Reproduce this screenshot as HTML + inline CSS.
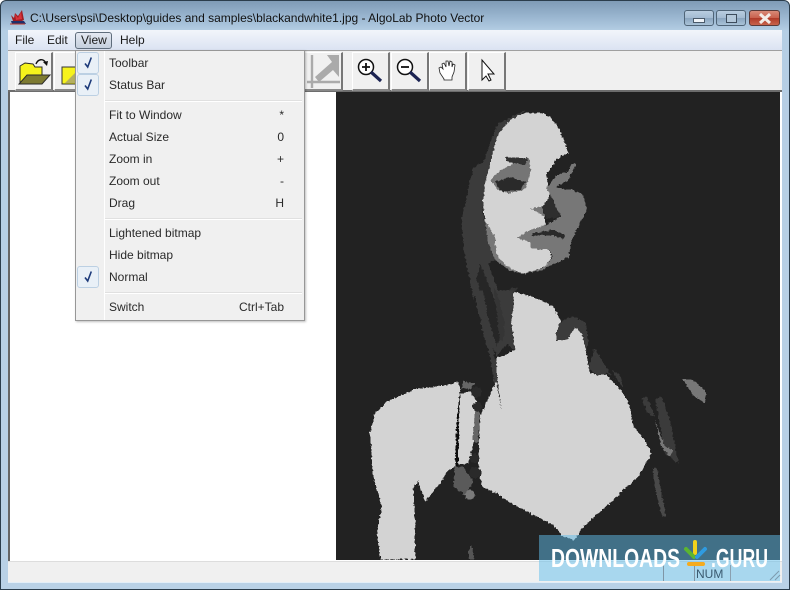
<!DOCTYPE html>
<html><head><meta charset="utf-8">
<style>
html,body{margin:0;padding:0;background:#fff}
body{width:790px;height:590px;position:relative;overflow:hidden;font-family:"Liberation Sans",sans-serif;font-size:12px;color:#1a1a1a}
div{position:absolute;box-sizing:border-box}
.frame{left:0;top:0;width:790px;height:590px;background:linear-gradient(#7f9bb6 0,#9ab6d0 16px,#b5cee4 30px,#b9d1e6 590px);border:1px solid #2b3d4c;border-radius:6px 6px 0 0}
.menubar{left:8px;top:30px;width:774px;height:20px;background:linear-gradient(#f2f5fb,#dbe3f2)}
.m{top:33px;font-size:12px;line-height:14px}
.toolbar{left:8px;top:50px;width:774px;height:42px;background:#f0f0f0;border-top:1px solid #a0a0a0;border-bottom:2px solid #6d6d6d}
.btn{top:52px;width:38px;height:39px;background:#f0f0f0;border-top:1px solid #fff;border-left:1px solid #fff;border-right:2px solid #777;border-bottom:2px solid #888}
.client{left:8px;top:92px;width:774px;height:469px;background:#fff;border-left:2px solid #666}
.status{left:8px;top:561px;width:774px;height:21px;background:#f0f0f0;border-top:1px solid #ddd}
.menu{left:75px;top:50px;width:230px;height:271px;background:#f0f0f0;border:1px solid #979797;box-shadow:1px 1px 2px rgba(0,0,0,.25)}
.gut{left:104px;top:51px;width:1px;height:269px;background:#e2e3e3;border-right:1px solid #fff}
.it{left:109px;font-size:12px;line-height:14px;color:#2a2a2a}
.sc{right:506px;font-size:12px;line-height:14px;color:#2a2a2a;text-align:right}
.sep{left:105px;width:197px;height:2px;background:#e0e0e0;border-bottom:1px solid #fff}
.ck{left:77px;width:22px;height:22px;background:#e9f0f7;border:1px solid #bcd0e3;border-radius:3px}
.wb{top:10px;height:16px;border:1px solid #4f6477;border-radius:3px}
</style></head><body>
<div class="frame"></div>
<svg style="position:absolute;left:0;top:0" width="30" height="30"><path d="M11 15l3 3 1-5 3 3 4-6 2 10-4 2-7-1z" fill="#a11c22"/><path d="M15 14l3 4 3-6 1 7-6 1z" fill="#d8323a"/><path d="M11 21h13l2 3H12z" fill="#1f2f6b"/><path d="M10 24h15" stroke="#c0392b"/></svg>
<div style="left:30px;top:11px;font-size:12px;line-height:15px;white-space:nowrap;color:#111;width:470px">C:\Users\psi\Desktop\guides and samples\blackandwhite1.jpg - AlgoLab Photo Vector</div>
<div class="wb" style="left:684px;width:30px;background:linear-gradient(#b9cde0 0,#a3bbd2 50%,#8aa5bf 51%,#a9c2d8 100%)"><div style="left:8px;top:7px;width:12px;height:5px;background:#eef3f8;border:1px solid #4a5a6a"></div></div>
<div class="wb" style="left:716px;width:30px;background:linear-gradient(#b9cde0 0,#a3bbd2 50%,#8aa5bf 51%,#a9c2d8 100%)"><div style="left:9px;top:3px;width:11px;height:9px;background:#b4c8da;border:1px solid #3d4c5c"></div></div>
<div class="wb" style="left:749px;width:31px;background:linear-gradient(#d88a78 0,#c9604c 50%,#b03a28 51%,#c8634c 100%);border-color:#5a3a38"><svg style="position:absolute;left:8px;top:2px" width="14" height="11"><path d="M2 1l10 9M12 1L2 10" stroke="#f2ece8" stroke-width="3"/></svg></div>

<div class="menubar"></div>
<div class="m" style="left:15px">File</div>
<div class="m" style="left:47px">Edit</div>
<div style="left:75px;top:32px;width:37px;height:17px;background:linear-gradient(#e4e9f2,#c5cfdd);border:1px solid #5f6d7c;border-radius:3px"></div>
<div class="m" style="left:81px">View</div>
<div class="m" style="left:120px">Help</div>

<div class="toolbar"></div>
<div class="btn" style="left:15px"></div>
<svg style="position:absolute;left:15px;top:52px" width="38" height="38"><path d="M5 14l5-3 8 1 2 3h7v10H12L5 31z" fill="#f6f31c" stroke="#2a2a2a"/><path d="M12 23h23l-8 9H4z" fill="#7d7a32" stroke="#2a2a2a"/><path d="M21 12c2-5 7-6 10-1" fill="none" stroke="#111" stroke-width="1.4"/><path d="M28 10l5-1-1 5z" fill="#111"/></svg>
<div class="btn" style="left:54px"></div>
<svg style="position:absolute;left:61px;top:66px" width="16" height="20"><path d="M1 1h15v17H1z" fill="#f6f31c" stroke="#333"/><path d="M15 6v11H4z" fill="#b5b060"/></svg>
<div class="btn" style="left:305px;width:38px;border-left:0"></div>
<svg style="position:absolute;left:300px;top:50px" width="44" height="40"><path d="M12 5v33M7 32h33" stroke="#aaa" stroke-width="2.4"/><path d="M15 27l17-15-5-7h12v22l-6-7-14 12z" fill="#aaa"/></svg>
<div class="btn" style="left:352px"></div>
<svg style="position:absolute;left:352px;top:52px" width="38" height="38"><circle cx="14" cy="15" r="7.5" fill="#fff" stroke="#111" stroke-width="1.5"/><path d="M10 15h8M14 11v8" stroke="#111" stroke-width="1.8"/><path d="M19 20l10 9" stroke="#1b2352" stroke-width="3.2"/></svg>
<div class="btn" style="left:391px"></div>
<svg style="position:absolute;left:391px;top:52px" width="38" height="38"><circle cx="14" cy="15" r="7.5" fill="#fff" stroke="#111" stroke-width="1.5"/><path d="M10 15h8" stroke="#111" stroke-width="1.8"/><path d="M19 20l10 9" stroke="#1b2352" stroke-width="3.2"/></svg>
<div class="btn" style="left:429px"></div>
<svg style="position:absolute;left:429px;top:52px" width="38" height="38"><path d="M15 27l-4-6-1-5 2-1 2 2-1-5 2-1 2 4 0-6h2l1 5 1-5 2 1 0 5 1-3 2 1-1 7-2 5v3h-8z" fill="#fff" stroke="#222" stroke-width=".8"/></svg>
<div class="btn" style="left:468px"></div>
<svg style="position:absolute;left:468px;top:52px" width="38" height="38"><path d="M14 8v20l4-4 3 5 2-1-3-6h6z" fill="#fff" stroke="#111" stroke-width="1"/></svg>

<div class="client"></div>
<div class="status"></div>
<div style="left:8px;top:582px;width:774px;height:1px;background:#e3eef7"></div>

<svg style="position:absolute;left:336px;top:92px" width="444" height="468" viewBox="336 92 444 468" shape-rendering="crispEdges">
<defs><filter id="j" x="-5%" y="-5%" width="110%" height="110%"><feTurbulence type="fractalNoise" baseFrequency=".35" numOctaves="2" seed="3"/><feDisplacementMap in="SourceGraphic" scale="3.5" xChannelSelector="R" yChannelSelector="G"/></filter></defs>
<rect x="336" y="92" width="444" height="468" fill="#222"/>
<g filter="url(#j)">
<g transform="translate(430 100) scale(.33333)">
<path d="M180 130L205 70 285 32 230 90 185 170 165 250 158 330 172 420 195 480 160 500 130 600 100 440 95 360 115 270 130 200 160 190z" fill="#3a3a3a"/>
<path d="M285 38L340 40 365 55 385 80 400 120 415 160 378 178 350 225 355 270 360 310 335 320 305 325 345 350 345 375 290 395 260 415 298 425 305 445 360 450 365 470 345 500 280 522 230 500 200 465 195 410 165 360 158 300 165 250 180 190 205 100 240 60z" fill="#d3d3d3"/>
<path d="M205 215L250 192 235 172 295 175 303 215 285 268 235 282 200 265 182 240z" fill="#757575"/>
<path d="M225 172L295 175 285 195 230 185z" fill="#333"/>
<path d="M193 245L240 232 287 245 270 270 215 274z" fill="#2c2c2c"/>
<path d="M375 262L415 240 440 190 425 190 415 215 380 225 350 265 365 300 395 350 345 375 290 395 260 415 298 425 305 445 360 450 368 470 342 502 280 522 270 525 335 510 415 472 425 420 470 330 460 285 430 270z" fill="#777"/>
<path d="M362 285L392 350 350 357 335 322z" fill="#2e2e2e"/>
<path d="M300 325L335 320 345 350 320 335z" fill="#777"/>
<path d="M305 400L370 390 405 405 400 418 370 405 305 408z" fill="#2a2a2a"/>
<path d="M165 360L195 410 200 465 230 500 280 522 240 512 195 480 172 420z" fill="#777"/>
</g>
<g transform="translate(440 200) scale(.33333)">
<path d="M85 0L125 0 118 60 140 180 190 310 215 370 210 420 170 470 150 420 100 260 75 100z" fill="#3a3a3a"/>
<path d="M120 190L160 290 195 380 170 440 155 390 110 240z" fill="#262626"/>
<path d="M150 470L172 480 185 600 170 600z" fill="#3a3a3a"/>
<path d="M160 260L190 310 205 330 210 265 235 262 220 280 225 370 205 365 215 440 180 420z" fill="#353535"/>
<path d="M350 420L345 400 370 360 400 350 435 365 445 420 438 470 430 410 405 378 385 400 375 420z" fill="#3a3a3a"/>
<path d="M445 505L465 445 500 505 540 560 510 520 470 525z" fill="#3a3a3a"/>
</g>
<g transform="translate(340 290) scale(.33333)">
<path d="M120 808L112 720 125 650 100 560 90 430 105 370 140 335 230 297 320 285 355 275 360 300 350 400 345 530 320 545 300 580 255 635 235 575 220 590 225 700 225 808z" fill="#d3d3d3"/>
<path d="M362 310L398 305 410 340 400 460 385 520 350 525 355 400z" fill="#d3d3d3"/>
<path d="M520 5L580 20 640 50 665 100 650 150 680 150 705 110 725 130 735 170 750 250 800 255 850 310 870 350 880 410 915 450 935 490 895 560 850 600 820 630 730 710 705 750 670 740 640 705 530 650 470 610 425 590 415 520 420 380 470 270 470 205 525 180 510 150 510 100 520 60z" fill="#d3d3d3"/>
<path d="M660 100L680 95 705 85 738 110 735 140 705 108 680 150 650 152 648 130z" fill="#3a3a3a"/>
<path d="M400 0L430 0 465 210 485 360 465 250 430 130z" fill="#3a3a3a"/>
<path d="M470 0L520 0 515 100 525 180 490 155 495 100z" fill="#3a3a3a"/>
<path d="M410 290a16 16 0 1 0 .1 0zM412 335a15 15 0 1 0 .1 0zM403 490a15 15 0 1 0 .1 0zM405 530a18 18 0 1 0 .1 0z" fill="#2c2c2c"/>
<path d="M405 365L420 365 415 460 398 450z" fill="#666"/>
<path d="M370 275L405 280 395 295 365 295z" fill="#666"/>
<path d="M345 530L370 530 400 575 375 615 340 590z" fill="#5a5a5a"/>
<circle cx="390" cy="614" r="15" fill="#7a7a7a"/>
<path d="M758 180L775 200 795 255 765 255z" fill="#3a3a3a"/>
<path d="M815 240L840 255 850 295z" fill="#3a3a3a"/>
<path d="M945 325L965 320 990 390 1015 520 975 490z" fill="#3a3a3a"/>
<path d="M905 325L920 320 945 380 925 370z" fill="#3a3a3a"/>
<path d="M945 390L975 470 1000 480 990 500 965 470z" fill="#777"/>
<path d="M1027 266L1060 270 1098 305 1095 340 1060 315z" fill="#777"/>
<path d="M938 535L950 535 978 680 965 680 945 590z" fill="#4a4a4a"/>
<path d="M385 780L395 765 403 808 388 808z" fill="#555"/>
<path d="M350 400L358 320 355 530 345 530z" fill="#111"/>
</g>
</g>
</svg>

<div style="left:539px;top:535px;width:241px;height:46px;background:rgba(95,190,235,.5)"></div>
<div style="left:663px;top:565px;width:1px;height:16px;background:#7f95a5"></div>
<div style="left:694px;top:565px;width:1px;height:16px;background:#7f95a5"></div>
<div style="left:730px;top:565px;width:1px;height:16px;background:#8aa0b0"></div>
<div style="left:696px;top:567px;font-size:12px;line-height:14px;color:#3a5a70">NUM</div>
<svg style="position:absolute;left:539px;top:535px" width="250" height="50">
<text x="12" y="32" font-family="Liberation Sans" font-weight="bold" font-size="26" fill="#fff" textLength="129" lengthAdjust="spacingAndGlyphs">DOWNLOADS</text>
<text x="172" y="32" font-family="Liberation Sans" font-weight="bold" font-size="26" fill="#fff" textLength="57" lengthAdjust="spacingAndGlyphs">.GURU</text>
<path d="M156 7v11" stroke="#f2d21c" stroke-width="4" stroke-linecap="round"/>
<path d="M147 14l8 8" stroke="#5cb531" stroke-width="4" stroke-linecap="round"/>
<path d="M166 14l-8 8" stroke="#2f9be0" stroke-width="4" stroke-linecap="round"/>
<path d="M150 29h14" stroke="#f5ab1e" stroke-width="4" stroke-linecap="round"/>
<path d="M231 45l9-9M236 45l5-5" stroke="#7d9aae" stroke-width="1"/>
</svg>

<div class="menu"></div>
<div class="gut"></div>
<div class="ck" style="top:52px"><svg width="20" height="20"><path d="M7 10.5l2.7 3.5 3.6-9.5" fill="none" stroke="#1d3a7a" stroke-width="1.6"/></svg></div>
<div class="ck" style="top:74px"><svg width="20" height="20"><path d="M7 10.5l2.7 3.5 3.6-9.5" fill="none" stroke="#1d3a7a" stroke-width="1.6"/></svg></div>
<div class="ck" style="top:266px"><svg width="20" height="20"><path d="M7 10.5l2.7 3.5 3.6-9.5" fill="none" stroke="#1d3a7a" stroke-width="1.6"/></svg></div>
<div class="it" style="top:56px">Toolbar</div>
<div class="it" style="top:78px">Status Bar</div>
<div class="sep" style="top:100px"></div>
<div class="it" style="top:108px">Fit to Window</div><div class="sc" style="top:108px">*</div>
<div class="it" style="top:130px">Actual Size</div><div class="sc" style="top:130px">0</div>
<div class="it" style="top:152px">Zoom in</div><div class="sc" style="top:152px">+</div>
<div class="it" style="top:174px">Zoom out</div><div class="sc" style="top:174px">-</div>
<div class="it" style="top:196px">Drag</div><div class="sc" style="top:196px">H</div>
<div class="sep" style="top:218px"></div>
<div class="it" style="top:226px">Lightened bitmap</div>
<div class="it" style="top:248px">Hide bitmap</div>
<div class="it" style="top:270px">Normal</div>
<div class="sep" style="top:292px"></div>
<div class="it" style="top:300px">Switch</div><div class="sc" style="top:300px">Ctrl+Tab</div>
</body></html>
